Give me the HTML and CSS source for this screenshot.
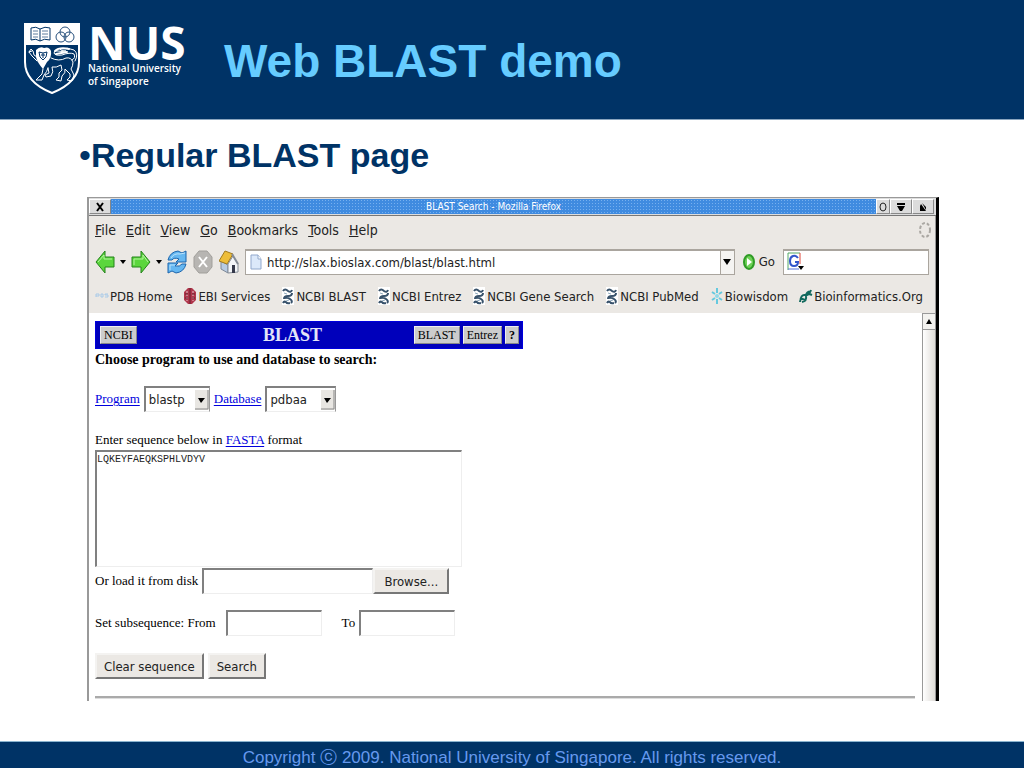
FILE: index.html
```html
<!DOCTYPE html>
<html lang="en">
<head>
    <meta charset="UTF-8">
    <meta name="viewport" content="width=device-width, initial-scale=1.0">
    <title>Web BLAST demo</title>
    <link rel="stylesheet" href="styles.css">
</head>
<body>

    <!-- Shared bookmark icon -->
    <svg class="defs" width="0" height="0" aria-hidden="true">
        <symbol id="ncbi" viewBox="0 0 14 18">
            <rect x="1" width="12" height="18" fill="#fff"/>
            <path d="M2 4Q4 1 7 4Q10 6 11 3M11 6Q11 9 7 9Q3 9 3 12M4 11Q7 10 9 12Q12 14 10 16M9 16Q6 17 5 15Q3 14 2 16" fill="none" stroke="#38526b" stroke-width="2"/>
            <path d="M3 6L6 7M8 13L5 14" stroke="#8fa9bd" stroke-width="1"/>
        </symbol>
    </svg>

    <header class="slide-header">
        <div class="logo">
            <svg class="crest" width="56" height="72" viewBox="0 0 56 72">
                <path d="M1 1H55V39C55 55 43 64 28 70C13 64 1 55 1 39Z" fill="#003366" stroke="#fff" stroke-width="2"/>
                <path d="M1 1H55V22H1Z" fill="#fff"/>
                <path d="M7 5Q12 3 16 6Q21 3 26 5V17Q20 15 16 18Q12 15 7 17ZM16 6V18" fill="none" stroke="#003366" stroke-width="1"/>
                <path d="M9 8H14M9 11H14M9 14H14M18 8H24M18 11H24M18 14H24" stroke="#5d7c9e" stroke-width="1"/>
                <g fill="none" stroke="#27507c" stroke-width="1">
                    <circle cx="41" cy="9" r="5"/>
                    <circle cx="37" cy="14" r="5"/>
                    <circle cx="45" cy="14" r="5"/>
                </g>
                <path d="M12 27Q16 23 20 25Q25 23 27 28Q28 35 23 39L19 46Q13 39 12 34Z" fill="#fff"/>
                <path d="M15 29L19 30L23 29L22 34L19 37L16 34ZM17 32H21M19 30V35" fill="none" stroke="#003366" stroke-width="1"/>
                <g fill="none" stroke="#fff" stroke-width="1" stroke-linecap="round" stroke-linejoin="round">
                    <path d="M13 38L8 33L5 29L7 26L9 28L10 32L13 34M5 29L8 28"/>
                    <path d="M27 35Q35 39 42 35Q47 34 49 39Q49 43 47 46L50 52L48 58L43 57L46 54L46 51L41 46Q42 50 38 53L37 58L32 57L35 54V50L38 47L37 42Q32 45 28 44Q30 49 27 53L22 54L21 52L25 50L24 45M24 45Q23 49 20 52L18 57L12 57L15 54L18 51L19 46"/>
                    <path d="M48 37Q52 35 50 31Q46 29 38 32Q31 33 30 30Q30 27 34 28Q38 29 42 28Q36 28 36 26Q44 24 50 27Q55 31 51 38"/>
                    <path d="M31 28Q35 24 45 26M32 31L43 29" stroke-width="2"/>
                </g>
            </svg>
            <div class="logo-text">
                <span class="logo-name">NUS</span>
                <span class="logo-sub">National University<br>of Singapore</span>
            </div>
        </div>
        <h1>Web BLAST demo</h1>
    </header>

    <main>
        <ul class="topic">
            <li>Regular BLAST page</li>
        </ul>

        <section class="window">
            <div class="titlebar">
                <button class="win-btn" aria-label="Close">
                    <svg width="10" height="10" viewBox="0 0 10 10"><path d="M2 1L8 9M8 1L2 9" stroke="#000" stroke-width="2"/></svg>
                </button>
                <div class="title">BLAST Search - Mozilla Firefox</div>
                <button class="win-btn small" aria-label="Stick">
                    <svg width="10" height="10" viewBox="0 0 10 10"><ellipse cx="5" cy="5" rx="3" ry="4" fill="none" stroke="#222"/></svg>
                </button>
                <button class="win-btn" aria-label="Minimize">
                    <svg width="10" height="10" viewBox="0 0 10 10"><path d="M1 1H9V3H1ZM1 4H9L6 9H4Z"/></svg>
                </button>
                <button class="win-btn" aria-label="Maximize">
                    <svg width="10" height="10" viewBox="0 0 10 10"><path d="M2 4L3 2L8 9H2ZM4 1L8 5V8Z"/></svg>
                </button>
            </div>

            <div class="chrome">
                <nav class="menubar">
                    <a href="#"><u>F</u>ile</a>
                    <a href="#"><u>E</u>dit</a>
                    <a href="#"><u>V</u>iew</a>
                    <a href="#"><u>G</u>o</a>
                    <a href="#"><u>B</u>ookmarks</a>
                    <a href="#"><u>T</u>ools</a>
                    <a href="#"><u>H</u>elp</a>
                    <svg class="throbber" width="14" height="18" viewBox="0 0 14 18">
                        <ellipse cx="7" cy="9" rx="5" ry="7" fill="none" stroke="#aaa7a2" stroke-width="2" stroke-dasharray="3 2"/>
                    </svg>
                </nav>

                <div class="toolbar">
                    <button class="tool" aria-label="Back">
                        <svg width="20" height="24" viewBox="0 0 20 24"><path d="M1 12L10 1V7H19V17H10V23Z" fill="#5bd63d" stroke="#24831b"/><path d="M3 12L9 5V9H17" fill="none" stroke="#b5f39f"/></svg>
                    </button>
                    <svg class="caret" width="6" height="4" viewBox="0 0 6 4"><path d="M0 0H6L3 4Z"/></svg>
                    <button class="tool" aria-label="Forward">
                        <svg width="20" height="24" viewBox="0 0 20 24"><path d="M19 12L10 1V7H1V17H10V23Z" fill="#5bd63d" stroke="#24831b"/><path d="M3 15V9H12V5L17 12" fill="none" stroke="#b5f39f"/></svg>
                    </button>
                    <svg class="caret" width="6" height="4" viewBox="0 0 6 4"><path d="M0 0H6L3 4Z"/></svg>
                    <button class="tool" aria-label="Reload">
                        <svg width="20" height="24" viewBox="0 0 20 24">
                            <path d="M1 10Q3 2 11 1L15 3L19 1V12H9L12 9Q7 7 5 10Z" fill="#65b7f1" stroke="#1b65ad"/>
                            <path d="M19 14Q17 22 9 23L5 21L1 23V13H11L8 16Q13 17 15 14Z" fill="#65b7f1" stroke="#1b65ad"/>
                            <path d="M4 8Q7 3 13 4L18 3M3 20V15H8" fill="none" stroke="#b9e2fb"/>
                        </svg>
                    </button>
                    <button class="tool stop" aria-label="Stop">
                        <svg width="20" height="24" viewBox="0 0 20 24"><path d="M6 1H14L19 7V17L14 23H6L1 17V7Z" fill="#b7b5b2" stroke="#a19f9b"/><path d="M6 7L14 17M14 7L6 17" stroke="#fff" stroke-width="2"/></svg>
                    </button>
                    <button class="tool" aria-label="Home">
                        <svg width="20" height="24" viewBox="0 0 20 24">
                            <path d="M2 11L9 15V23L2 19Z" fill="#b8cbe2" stroke="#7c8796"/>
                            <path d="M9 14L14 6L19 14V22L9 23Z" fill="#f3f5f8" stroke="#858c96"/>
                            <path d="M0 11L6 1L14 4L8 14Z" fill="#edbd39" stroke="#a17a1e"/>
                            <path d="M13 4L19 14" stroke="#858c96" stroke-width="2"/>
                            <path d="M13 15H16V23H13Z" fill="#35394a"/>
                        </svg>
                    </button>
                    <div class="address">
                        <svg width="12" height="16" viewBox="0 0 12 16"><path d="M1 1H8L11 5V15H1Z" fill="#dce9fa" stroke="#91a8cc"/><path d="M8 1V5H11" fill="#fff" stroke="#91a8cc"/></svg>
                        <input type="text" aria-label="Address" value="http://slax.bioslax.com/blast/blast.html">
                        <button aria-label="History"><svg width="8" height="6" viewBox="0 0 8 6"><path d="M0 0H8L4 6Z"/></svg></button>
                    </div>
                    <button class="go">
                        <svg width="12" height="16" viewBox="0 0 12 16"><ellipse cx="6" cy="8" rx="5" ry="7" fill="#6fd257" stroke="#2f9b25" stroke-width="2"/><path d="M4 4L9 8L4 12Z" fill="#fff"/></svg>
                        Go
                    </button>
                    <div class="search">
                        <svg width="18" height="20" viewBox="0 0 18 20">
                            <path d="M1 18V1H13" fill="none" stroke="#55a866"/>
                            <path d="M13 1V12" stroke="#df4638"/>
                            <path d="M1 17H12" stroke="#5674da"/>
                            <path d="M11 6Q9 3 6 4Q3 5 3 9Q3 14 7 14Q11 14 11 10H8" fill="none" stroke="#3156cb" stroke-width="2"/>
                            <path d="M11 14H17L14 18Z"/>
                        </svg>
                        <input type="text" aria-label="Search">
                    </div>
                </div>

                <nav class="bookmarks">
                    <a href="#"><svg width="14" height="18" viewBox="0 0 14 18"><path d="M1 10V7H4V9H1M6 7V10H8V7H6M13 7H10V8H13V10H10" fill="none" stroke="#a9cae8"/></svg>PDB Home</a>
                    <a href="#"><svg width="14" height="18" viewBox="0 0 14 18"><path d="M5 1H9L13 5V13L9 17H5L1 13V5Z" fill="#b0354b"/><path d="M4 4V14M10 4V14" stroke="#e8c6cb" stroke-dasharray="2 1"/><path d="M7 1V17M2 7H5M9 7H12M2 11H5M9 11H12" stroke="#66202d"/></svg>EBI Services</a>
                    <a href="#"><svg width="14" height="18"><use href="#ncbi"/></svg>NCBI BLAST</a>
                    <a href="#"><svg width="14" height="18"><use href="#ncbi"/></svg>NCBI Entrez</a>
                    <a href="#"><svg width="14" height="18"><use href="#ncbi"/></svg>NCBI Gene Search</a>
                    <a href="#"><svg width="14" height="18"><use href="#ncbi"/></svg>NCBI PubMed</a>
                    <a href="#"><svg width="14" height="18" viewBox="0 0 14 18"><path d="M7 1V6M7 12V17M2 5L5 7M12 5L9 7M2 13L5 11M12 13L9 11" stroke="#65c9df" stroke-width="2"/><circle cx="7" cy="9" r="2" fill="#91d9e8"/></svg>Biowisdom</a>
                    <a href="#"><svg width="14" height="18" viewBox="0 0 14 18"><path d="M1 15Q2 7 6 8Q10 9 12 3M3 15Q8 14 7 9Q7 5 12 4M1 11L6 13M8 6L13 8" fill="none" stroke="#12695d" stroke-width="2"/></svg>Bioinformatics.Org</a>
                </nav>
            </div>

            <div class="viewport">
                <form class="page" onsubmit="return false">
                    <div class="blast-bar">
                        <button type="button">NCBI</button>
                        <h2>BLAST</h2>
                        <div class="blast-links">
                            <button type="button">BLAST</button>
                            <button type="button">Entrez</button>
                            <button type="button"><b>?</b></button>
                        </div>
                    </div>
                    <p class="intro">Choose program to use and database to search:</p>

                    <div class="row">
                        <label for="program"><a href="#">Program</a></label>
                        <div class="select">
                            <select id="program"><option>blastp</option><option>blastn</option></select>
                            <svg width="14" height="20" viewBox="0 0 14 20"><path d="M0 0H14V20H0Z" fill="#e8e6e2"/><path d="M13 0V19H0" fill="none" stroke="#888"/><path d="M3 8H10L6 13Z"/></svg>
                        </div>
                        <label for="database"><a href="#">Database</a></label>
                        <div class="select wide">
                            <select id="database"><option>pdbaa</option><option>nr</option></select>
                            <svg width="14" height="20" viewBox="0 0 14 20"><path d="M0 0H14V20H0Z" fill="#e8e6e2"/><path d="M13 0V19H0" fill="none" stroke="#888"/><path d="M3 8H10L6 13Z"/></svg>
                        </div>
                    </div>

                    <label class="sequence-label" for="sequence">Enter sequence below in <a href="#">FASTA</a> format</label>
                    <textarea id="sequence" spellcheck="false">LQKEYFAEQKSPHLVDYV</textarea>

                    <div class="row file-row">
                        <label for="file">Or load it from disk</label>
                        <div class="file">
                            <input type="text" id="file">
                            <button type="button">Browse...</button>
                        </div>
                    </div>

                    <div class="row range-row">
                        <label for="from">Set subsequence: From</label>
                        <input type="text" id="from">
                        <label class="to" for="to">To</label>
                        <input type="text" id="to">
                    </div>

                    <div class="row">
                        <button type="reset">Clear sequence</button>
                        <button type="submit">Search</button>
                    </div>
                    <hr>
                </form>
                <div class="scrollbar">
                    <button aria-label="Scroll up"><svg width="6" height="5" viewBox="0 0 6 5"><path d="M3 0L6 5H0Z"/></svg></button>
                    <div class="thumb"></div>
                </div>
            </div>
        </section>
    </main>

    <footer>Copyright ⓒ 2009. National University of Singapore. All rights reserved.</footer>

</body>
</html>
```

FILE: styles.css
```css
* {
    margin: 0;
    padding: 0;
    box-sizing: border-box;
}

body {
    min-height: 100vh;
    display: flex;
    flex-direction: column;
    background: #fff;
    color: #000;
    font-family: "Liberation Sans", Arial, sans-serif;
}

svg {
    display: block;
    flex: none;
}

.defs {
    position: absolute;
}

button,
input,
select {
    font-family: "DejaVu Sans Condensed", "DejaVu Sans", sans-serif;
    font-size: 13px;
    color: #222;
}

/* Slide header */
.slide-header {
    height: 120px;
    padding: 2px 24px 0;
    display: flex;
    align-items: center;
    gap: 40px;
    background: #003366;
    border-bottom: 1px solid #8aa5bf;
}

.logo {
    display: flex;
    gap: 8px;
    width: 160px;
    margin-bottom: 4px;
    color: #fff;
}

.logo-text {
    display: flex;
    flex-direction: column;
    font-family: "Open Sans", sans-serif;
}

.logo-name {
    font-size: 46px;
    font-weight: 700;
    line-height: 39px;
}

.logo-sub {
    font-size: 10px;
    font-weight: 600;
    line-height: 13px;
    white-space: nowrap;
}

h1 {
    font-size: 46px;
    line-height: 56px;
    color: #66ccff;
}

/* Slide body */
main {
    flex: 1;
    padding: 14px 85px 40px 87px;
}

.topic {
    list-style: none;
    margin: 0 -8px 21px;
    font-size: 34px;
    line-height: 42px;
    font-weight: 700;
    color: #003366;
}

.topic li::before {
    content: "•";
    font-weight: 400;
}

/* Browser window */
.window {
    border: 1px solid #999;
    border-left-width: 2px;
    border-right: 3px solid #000;
    border-bottom: 0;
    font-family: "DejaVu Sans Condensed", "DejaVu Sans", sans-serif;
    font-size: 13px;
    color: #222;
}

.titlebar {
    display: flex;
    height: 18px;
    padding: 1px 2px 1px 0;
    background: #ddd;
    border-bottom: 1px solid #777;
}

.title {
    flex: 1;
    background: #3f8be0 radial-gradient(#76b0ef 1px, transparent 1px) 0 0 / 3px 3px;
    color: #fff;
    font-size: 10px;
    line-height: 15px;
    text-align: center;
}

.win-btn {
    display: flex;
    align-items: center;
    justify-content: center;
    width: 22px;
    background: #dcdcdc;
    border: 1px solid #888;
    border-top-color: #fff;
    border-left-color: #fff;
}

.win-btn.small {
    width: 14px;
}

.chrome {
    padding: 0 6px;
    background: #ebe8e4;
    border-right: 1px solid #999;
}

.chrome a {
    color: #222;
    text-decoration: none;
}

.menubar {
    display: flex;
    align-items: center;
    gap: 10px;
    height: 28px;
    font-size: 14px;
}

.throbber {
    margin-left: auto;
    margin-right: -3px;
}

.toolbar {
    display: flex;
    align-items: center;
    height: 35px;
}

.tool,
.go {
    border: 0;
    background: none;
}

.caret {
    margin: 0 5px;
}

.stop {
    margin: 0 6px;
}

.address,
.search {
    display: flex;
    align-items: center;
    height: 26px;
    background: #fff;
    border: 1px solid #aaa59e;
    border-top-width: 2px;
}

.address {
    flex: 1;
    margin-left: 6px;
    padding-left: 4px;
    gap: 5px;
}

.address input,
.search input {
    flex: 1;
    min-width: 0;
    border: 0;
    outline: 0;
    background: none;
}

.address button {
    display: flex;
    align-items: center;
    justify-content: center;
    align-self: stretch;
    width: 14px;
    border: 0;
    border-left: 1px solid #aaa59e;
    background: #f5f4f2;
}

.go {
    display: flex;
    align-items: center;
    gap: 4px;
    margin: 0 8px;
}

.search {
    width: 146px;
    padding-left: 3px;
}

.bookmarks {
    display: flex;
    align-items: center;
    justify-content: space-between;
    height: 34px;
    padding-right: 6px;
    white-space: nowrap;
}

.bookmarks a {
    display: flex;
    align-items: center;
    gap: 1px;
}

/* BLAST page */
.viewport {
    display: flex;
}

.page {
    flex: 1;
    padding: 8px 7px 2px 6px;
    background: #fff;
    font-family: "Liberation Serif", "Times New Roman", serif;
    font-size: 13px;
    line-height: 22px;
    color: #000;
}

.page a {
    color: #0000dd;
    text-underline-offset: 2px;
}

.page button {
    height: 26px;
    padding: 0 7px;
    background: #ebe8e4;
    border: 2px solid #777;
    border-top-color: #f4f3f1;
    border-left-color: #f4f3f1;
}

.page .blast-bar {
    display: grid;
    grid-template-columns: 1fr auto 1fr;
    align-items: center;
    width: 428px;
    height: 28px;
    padding: 0 3px 0 4px;
    background: #0000bb;
    border: 1px solid #0000dd;
}

.blast-bar h2 {
    padding-right: 34px;
    font-size: 18px;
    color: #e4e4f8;
}

.page .blast-bar button {
    justify-self: start;
    height: 18px;
    padding: 0 3px;
    background: #ccc;
    border: 1px solid #888;
    border-top-color: #eee;
    border-left-color: #eee;
    font-family: "Liberation Serif", "Times New Roman", serif;
    font-size: 12px;
    color: #000;
}

.blast-links {
    display: flex;
    justify-content: flex-end;
    gap: 3px;
}

.intro {
    font-size: 14px;
    font-weight: 700;
    margin-bottom: 15px;
}

.row {
    display: flex;
    align-items: center;
    gap: 4px;
    height: 26px;
    margin-bottom: 17px;
}

.page input,
.page textarea,
.select {
    background: #fff;
    border: 2px solid #808080;
    border-right: 1px solid #eee;
    border-bottom: 1px solid #eee;
    outline: 0;
}

.page input {
    width: 96px;
    height: 26px;
}

.select {
    position: relative;
    width: 66px;
    height: 26px;
    border-right: 1px solid #999;
}

.select.wide {
    width: 71px;
}

.select select {
    appearance: none;
    width: 100%;
    height: 100%;
    padding-left: 3px;
    border: 0;
    background: none;
}

/* arrow drawn over the native select */
.select svg {
    position: absolute;
    top: 2px;
    right: 0;
    pointer-events: none;
}

.sequence-label {
    display: block;
    line-height: 21px;
}

.page textarea {
    display: block;
    width: 367px;
    height: 117px;
    resize: none;
    font-family: "Liberation Mono", "Courier New", monospace;
    font-size: 10px;
    padding: 2px 0;
    color: #222;
}

.file-row {
    margin-top: 1px;
    margin-bottom: 16px;
}

.file {
    display: flex;
}

.file input {
    width: 171px;
}

.file button {
    width: 76px;
}

.range-row label {
    margin-right: 6px;
}

.range-row .to {
    margin: 0 0 0 16px;
}

.page hr {
    border: 0;
    height: 3px;
    background: #aaa;
    border-bottom: 1px solid #ddd;
}

.scrollbar {
    width: 14px;
    display: flex;
    flex-direction: column;
    background: #f0eeeb;
    border: 1px solid #999;
    border-bottom: 0;
}

.scrollbar button {
    display: flex;
    align-items: center;
    justify-content: center;
    height: 16px;
    border: 0;
    border-bottom: 1px solid #999;
    background: #f3f2ef;
}

.thumb {
    flex: 1;
    background: linear-gradient(to right, #fff, #dfdcd8);
}

footer {
    height: 28px;
    padding-top: 5px;
    background: #003366;
    border-top: 1px solid #8ab4cf;
    color: #6699ee;
    font-size: 17px;
    line-height: 22px;
    text-align: center;
}
```
